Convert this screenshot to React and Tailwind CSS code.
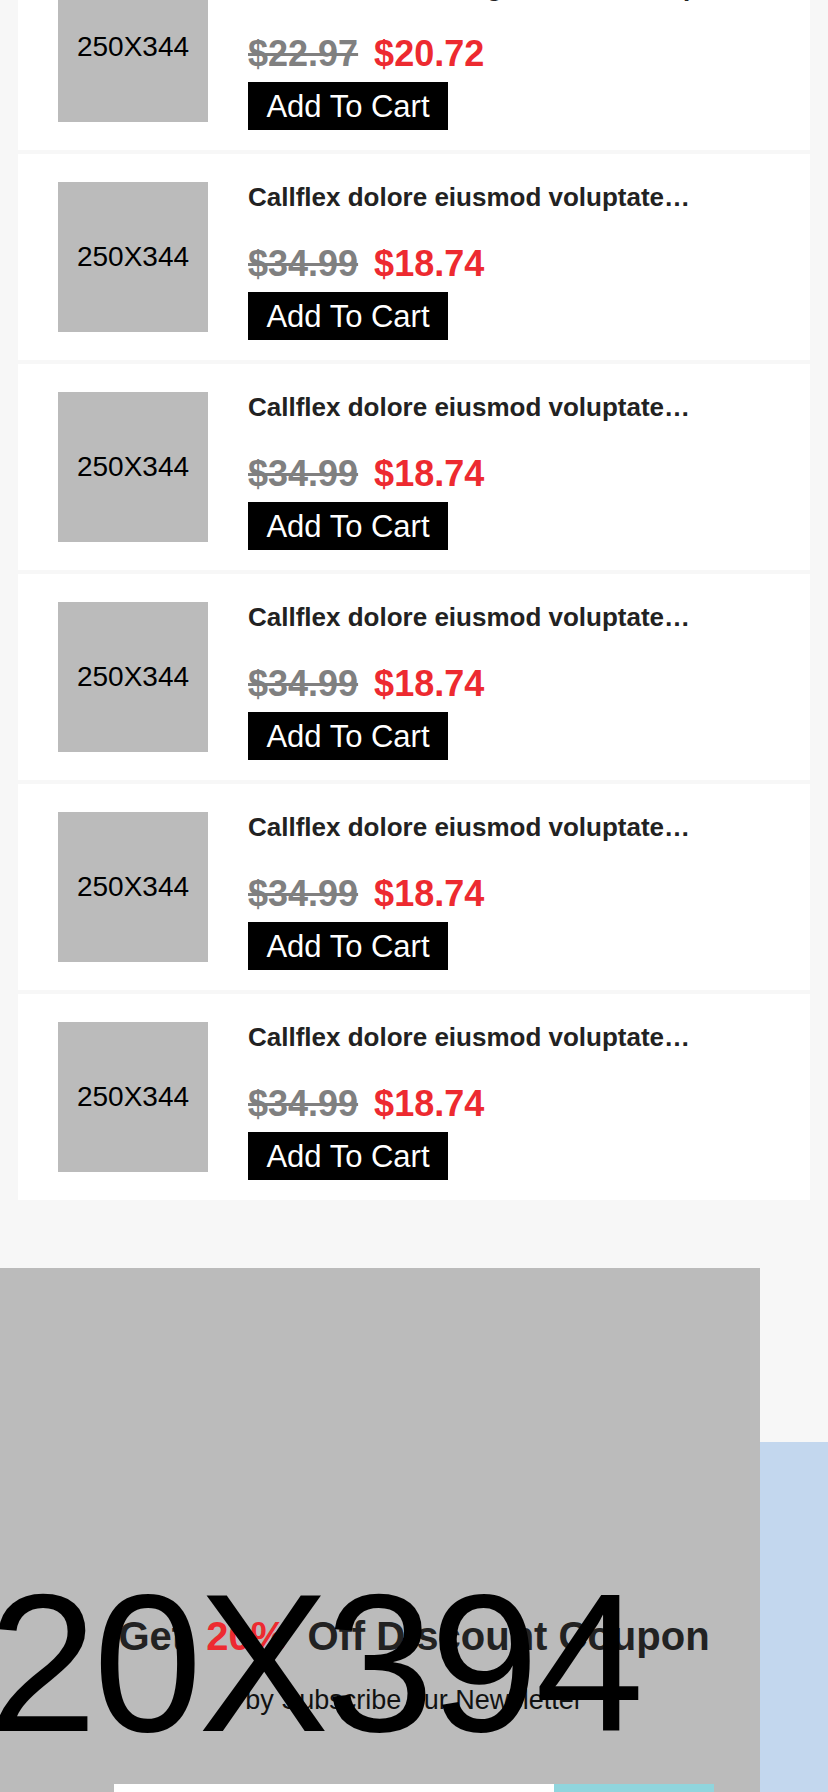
import React from "react";

const products = [
  { title: "Callflex dolores magna etiam nulla p…", oldPrice: "$22.97", price: "$20.72" },
  { title: "Callflex dolore eiusmod voluptate…", oldPrice: "$34.99", price: "$18.74" },
  { title: "Callflex dolore eiusmod voluptate…", oldPrice: "$34.99", price: "$18.74" },
  { title: "Callflex dolore eiusmod voluptate…", oldPrice: "$34.99", price: "$18.74" },
  { title: "Callflex dolore eiusmod voluptate…", oldPrice: "$34.99", price: "$18.74" },
  { title: "Callflex dolore eiusmod voluptate…", oldPrice: "$34.99", price: "$18.74" },
];

const ProductRow = ({ item }) => {
  return (
    <div className="flex items-start gap-10 bg-white pl-10 pt-[28px] pb-5">
      {/* image placeholder */}
      <div className="flex h-[150px] w-[150px] shrink-0 items-center justify-center bg-[#bbbbbb] text-[28px] text-black">
        250X344
      </div>
      <div className="flex flex-col items-start">
        <h3 className="whitespace-nowrap text-[26px] font-bold leading-[30px] text-[#222222]">
          {item.title}
        </h3>
        <div className="mt-8 flex items-baseline gap-4 text-[36px] font-bold leading-[40px]">
          <span className="text-[#808080] line-through">{item.oldPrice}</span>
          <span className="text-[#ed2a30]">{item.price}</span>
        </div>
        <button className="mt-2 flex h-[48px] w-[200px] items-center justify-center bg-black text-[31px] leading-none text-white">
          Add To Cart
        </button>
      </div>
    </div>
  );
};

const App = () => {
  return (
    <div
      className="h-screen overflow-hidden bg-[#f7f7f7]"
      style={{ fontFamily: '"Liberation Sans", Arial, sans-serif' }}
    >
      {/* Product list (scrolled) */}
      <div className="-mt-[56px] flex flex-col gap-1 px-[18px]">
        {products.map((item, i) => (
          <ProductRow key={i} item={item} />
        ))}
      </div>

      {/* Newsletter */}
      <div className="relative mt-[68px]">
        <div className="absolute left-0 top-0 h-full w-[760px] overflow-hidden bg-[#bbbbbb]">
          <span className="absolute right-[120px] top-[298px] z-20 whitespace-nowrap text-[196px] leading-none tracking-[-4px] text-black">
            720X394
          </span>
        </div>
        <div className="h-[174px]" />
        <section className="bg-[#c3d7ee] pt-[170px] pb-10">
          <div className="relative z-10 flex flex-col items-center">
            <h2 className="text-[40px] font-bold leading-[48px] text-[#222222]">
              Get <span className="mx-[10px] text-[#ed2a30]">20%</span> Off Discount Coupon
            </h2>
            <p className="mt-6 text-[27px] leading-[32px] text-[#111111]">
              by Subscribe our Newsletter
            </p>
            <form className="mt-[68px] flex w-[600px]">
              <input
                type="email"
                className="h-[60px] w-[440px] bg-white px-4 text-[20px] outline-none"
              />
              <button type="button" className="h-[60px] w-[160px] bg-[#90d5dd]" />
            </form>
          </div>
        </section>
      </div>
    </div>
  );
};

export default App;
